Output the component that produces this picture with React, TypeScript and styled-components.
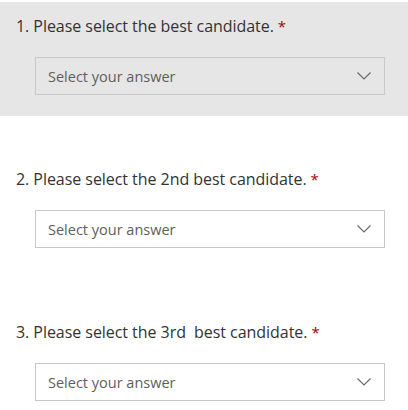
import React from "react";
import styled, { createGlobalStyle } from "styled-components";

const Global = createGlobalStyle`
  html, body { margin: 0; padding: 0; background: #ffffff; }
  body { font-family: "Segoe UI", "Open Sans", "Noto Sans", sans-serif; }
`;

const Form = styled.div`
  display: flex;
  flex-direction: column;
  gap: 39px;
  padding-top: 2px;
  width: 408px;
`;

const Question = styled.section<{ $active?: boolean }>`
  display: flex;
  flex-direction: column;
  gap: 19px;
  padding: 12px 23px 21px 16px;
  background: ${(p) => (p.$active ? "#e6e6e6" : "transparent")};
`;

const Title = styled.div`
  font-size: 16px;
  line-height: 24px;
  color: #333333;
  letter-spacing: -0.05px;
  white-space: pre;
`;

const Required = styled.span`
  color: #a80000;
  margin-left: 4px;
  font-size: 15px;
`;

const Select = styled.div<{ $active?: boolean }>`
  box-sizing: border-box;
  margin-left: 19px;
  width: 350px;
  height: 38px;
  display: flex;
  align-items: center;
  justify-content: space-between;
  padding: 0 12px 0 12px;
  border: 1px solid #c8c8c8;
  background: ${(p) => (p.$active ? "#e6e6e6" : "#ffffff")};
`;

const Placeholder = styled.span`
  font-size: 14.5px;
  color: #605e5c;
`;

const Chevron = () => (
  <svg width="16" height="10" viewBox="0 0 16 10" aria-hidden="true">
    <path d="M1.5 1.5 L8 8 L14.5 1.5" fill="none" stroke="#666666" strokeWidth="1.1" />
  </svg>
);

const questions = [
  "1. Please select the best candidate.",
  "2. Please select the 2nd best candidate.",
  "3. Please select the 3rd  best candidate.",
];

export default function App() {
  return (
    <>
      <Global />
      <Form>
        {questions.map((q, i) => (
          <Question key={i} $active={i === 0}>
            <Title>
              {q}
              <Required>*</Required>
            </Title>
            <Select $active={i === 0}>
              <Placeholder>Select your answer</Placeholder>
              <Chevron />
            </Select>
          </Question>
        ))}
      </Form>
    </>
  );
}
